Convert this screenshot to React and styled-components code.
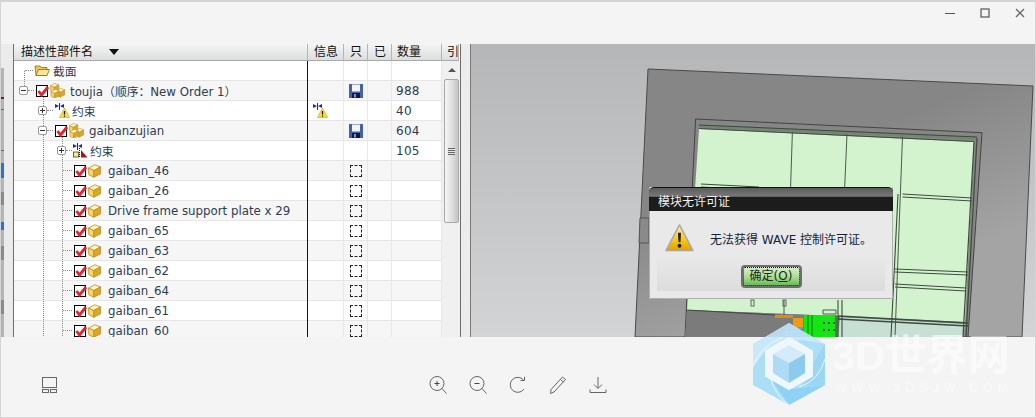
import styled, { createGlobalStyle } from "styled-components";

const Global = createGlobalStyle`
  html, body { margin: 0; padding: 0; background: #f4f4f4; }
  body { width: 1036px; height: 418px; overflow: hidden; font-family: "DejaVu Sans", "Noto Sans CJK SC", sans-serif; }
`;

const Shell = styled.div`
  position: relative;
  width: 1036px;
  height: 418px;
  display: flex;
  flex-direction: column;
  box-sizing: border-box;
  border: 1px solid #d4d4d4;
  border-top-width: 2px;
  background: #f4f4f4;
`;

const TitleBar = styled.div`
  height: 42px;
  display: flex;
  justify-content: flex-end;
  gap: 5px;
  padding-top: 4px;
  box-sizing: border-box;
`;

const WinBtn = styled.div`
  width: 30px;
  height: 14px;
  display: flex;
  align-items: center;
  justify-content: center;
`;

const Body = styled.div`
  height: 293px;
  display: flex;
`;

const SideStrip = styled.div`
  width: 13px;
  background: #ebebeb;
  border-right: 1px solid #6e6e6e;
  padding-top: 24px;
  box-sizing: border-box;
  overflow: hidden;
`;

const Segment = styled.div`
  width: 3px;
  height: ${(p) => p.$h}px;
  background: ${(p) => p.$c};
`;

const TreePanel = styled.div`
  width: 447px;
  box-sizing: border-box;
  display: flex;
  flex-direction: column;
  background: #fff;
  border-right: 1px solid #6e6e6e;
  overflow: hidden;
`;

const HeaderRow = styled.div`
  height: 17px;
  width: 445px;
  box-sizing: border-box;
  display: grid;
  grid-template-columns: 294px 36px 24px 24px 50px 17px;
  background: linear-gradient(#f4f5f5, #dcdede);
  border-bottom: 1px solid #a9a9a9;
`;

const HeaderCell = styled.div`
  font-size: 12px;
  line-height: 15px;
  color: #111;
  padding-left: ${(p) => p.$pad}px;
  box-shadow: inset -1px 0 0 #b5b5b5;
  white-space: nowrap;
  overflow: hidden;
  display: flex;
  align-items: center;
`;

const SortArrow = styled.span`
  width: 0;
  height: 0;
  margin-left: 16px;
  border-left: 5px solid transparent;
  border-right: 5px solid transparent;
  border-top: 6px solid #111;
`;

const RowsWrap = styled.div`
  display: flex;
  flex: 1;
  min-height: 0;
`;

const Rows = styled.div`
  width: 428px;
  position: relative;
`;

const Row = styled.div`
  height: 20px;
  display: grid;
  grid-template-columns: 294px 36px 24px 24px 50px;
  background: linear-gradient(#e6e6e6, #e6e6e6) bottom / 100% 1px no-repeat, ${(p) => (p.$odd ? "#f6f6f6" : "#fff")};
`;

const Cell = styled.div`
  position: relative;
  display: flex;
  align-items: center;
  justify-content: ${(p) => (p.$center ? "center" : "flex-start")};
  box-sizing: border-box;
  padding-bottom: 1px;
  border-right: 1px solid #e8e8e8;
  font-size: 12px;
  color: #2f3b52;
`;

const NameCell = styled(Cell)`
  padding-left: ${(p) => p.$indent}px;
  border-right: 1px solid #111;
  white-space: nowrap;
  font-size: 11.8px;
`;

const InfoCell = styled(Cell)`
  padding-left: 5px;
`;

const CountCell = styled(Cell)`
  padding-left: 4px;
  letter-spacing: 0.3px;
`;

const Expander = styled.span`
  width: 9px;
  height: 9px;
  box-sizing: border-box;
  border: 1px solid #9a9a9a;
  border-radius: 2px;
  background: #fff;
  position: relative;
  flex: none;
  &::before {
    content: "";
    position: absolute;
    left: 1px;
    right: 1px;
    top: 3px;
    height: 1px;
    background: #333;
  }
  &::after {
    content: "";
    display: ${(p) => (p.$open ? "none" : "block")};
    position: absolute;
    top: 1px;
    bottom: 1px;
    left: 3px;
    width: 1px;
    background: #333;
  }
`;

const Dots = styled.span`
  width: ${(p) => p.$w}px;
  margin-right: ${(p) => p.$gap}px;
  border-top: 1px dotted #8a8a8a;
  flex: none;
`;

const CheckBox = styled.span`
  width: 12px;
  height: 12px;
  box-sizing: border-box;
  border: 1px solid #000;
  background: #fff;
  flex: none;
  position: relative;
  margin-right: 2px;
  svg {
    position: absolute;
    left: -1px;
    top: -2px;
  }
`;

const IconSlot = styled.span`
  display: flex;
  flex: none;
  margin-right: ${(p) => p.$gap}px;
`;

const DashBox = styled.span`
  width: 12px;
  height: 12px;
  box-sizing: border-box;
  border: 1px dashed #222;
`;

const Guide = styled.span`
  position: absolute;
  top: ${(p) => p.$top}px;
  left: ${(p) => p.$left}px;
  height: ${(p) => p.$h}px;
  border-left: 1px dotted #8a8a8a;
`;

const ScrollTrack = styled.div`
  width: 18px;
  box-sizing: border-box;
  padding-left: 1px;
  background: #f0f0f0;
  display: flex;
  flex-direction: column;
  align-items: center;
`;

const ScrollUp = styled.span`
  width: 0;
  height: 0;
  margin: 7px 0 7px;
  border-left: 4px solid transparent;
  border-right: 4px solid transparent;
  border-bottom: 4px solid #555;
`;

const ScrollThumb = styled.div`
  width: 15px;
  height: 144px;
  box-sizing: border-box;
  border: 1px solid #a8a8a8;
  border-radius: 2px;
  background: linear-gradient(90deg, #f6f6f6, #dedede 55%, #c4c4c4);
  display: flex;
  align-items: center;
  justify-content: center;
`;

const Grip = styled.span`
  width: 7px;
  height: 7px;
  background: repeating-linear-gradient(#666 0 1px, #e4e4e4 1px 2px);
`;

const Divider = styled.div`
  width: 9px;
  background: #ececec;
`;

const Viewport = styled.div`
  flex: 1;
  position: relative;
  border-left: 1px solid #7a7a7a;
  overflow: hidden;
  background: linear-gradient(#b5b6b8, #d3d4d6);
  svg {
    display: block;
  }
`;

const Dialog = styled.div`
  position: absolute;
  left: 178px;
  top: 143px;
  width: 244px;
  height: 112px;
  background: #e9e9e9;
  border: 1px solid #b0b0b0;
  border-top: none;
  box-sizing: border-box;
  display: flex;
  flex-direction: column;
`;

const DialogTitle = styled.div`
  height: 24px;
  margin: 0 -1px;
  border-radius: 5px 5px 0 0;
  background: linear-gradient(#5c5c5c, #787878 36%, #1c1c1c 40%, #1c1c1c);
  border-top: 1px solid #111;
  box-sizing: border-box;
  color: #f0f0f0;
  font-size: 12px;
  padding: 7px 0 0 9px;
  line-height: 15px;
`;

const DialogBody = styled.div`
  flex: 1;
  margin: 0 7px 7px;
  display: flex;
  flex-direction: column;
  background: linear-gradient(#e9e9e9 55%, #dcdcdc);
`;

const Message = styled.div`
  display: flex;
  align-items: center;
  height: 54px;
  padding-left: 8px;
  gap: 16px;
  font-size: 12px;
  color: #14233c;
  white-space: nowrap;
`;

const OkButton = styled.div`
  align-self: center;
  width: 61px;
  height: 23px;
  box-sizing: border-box;
  border: 2px solid #6e6e6e;
  border-radius: 4px;
  background: linear-gradient(#d4efca, #b0e09c 48%, #62b84d);
  outline: 1px dotted #111;
  outline-offset: -3px;
  font-size: 12px;
  line-height: 19px;
  text-align: center;
  color: #1b2a12;
  u {
    text-decoration: underline;
  }
`;

const BottomBar = styled.div`
  flex: 1;
  display: grid;
  grid-template-columns: 1fr auto 1fr;
  align-items: center;
  padding-top: 16px;
`;

const ToolGroup = styled.div`
  display: flex;
  gap: 22px;
  align-items: center;
`;

const LayoutIconWrap = styled.div`
  padding-left: 41px;
  display: flex;
`;

const WmLogo = styled.svg`
  position: absolute;
  left: 752px;
  top: 321px;
  opacity: 0.88;
  pointer-events: none;
`;

const WmTitle = styled.div`
  position: absolute;
  left: 831px;
  top: 334px;
  font: bold 41.5px/40px "Liberation Sans", "Noto Sans CJK SC", sans-serif;
  color: rgba(255, 255, 255, 0.6);
  white-space: nowrap;
`;

const WmUrl = styled.div`
  position: absolute;
  left: 834px;
  top: 380px;
  font: 12px/12px "Liberation Sans", sans-serif;
  letter-spacing: 5.4px;
  color: rgba(255, 255, 255, 0.6);
  white-space: nowrap;
`;

function RedCheck() {
  return (
    <svg width="14" height="13" viewBox="0 0 14 13">
      <path d="M2.5 7 L5.5 11 L12 3" fill="none" stroke="#e8202a" strokeWidth="2.8" />
    </svg>
  );
}

function Cube({ x = 0, y = 0, s = 1 }) {
  return (
    <g transform={`translate(${x} ${y}) scale(${s})`}>
      <path d="M0.5 4 L7 0.5 L13 2.8 L6 6.5 Z" fill="#fff4bd" stroke="#b38d2a" strokeWidth=".8" />
      <path d="M0.5 4 L6 6.5 V13.5 L0.8 10.8 Z" fill="#f8d764" stroke="#b38d2a" strokeWidth=".8" />
      <path d="M6 6.5 L13 2.8 V10 L6 13.5 Z" fill="#dda726" stroke="#b38d2a" strokeWidth=".8" />
    </g>
  );
}

function Part() {
  return (
    <svg width="13" height="14" viewBox="0 0 13.5 14">
      <Cube />
    </svg>
  );
}

function Assembly() {
  return (
    <svg width="15" height="15" viewBox="0 0 15 15">
      <Cube x={0} y={0} s={0.68} />
      <Cube x={6} y={5} s={0.68} />
      <Cube x={0.5} y={6} s={0.68} />
    </svg>
  );
}

function Constraint({ warn }) {
  return (
    <svg width="15" height="15" viewBox="0 0 15 15">
      <path d="M0 1 L4 3 L0 5 Z M9 1 L5 3 L9 5 Z" fill="#1a2bb0" />
      <path d="M4.5 0 V7" stroke="#1a2bb0" strokeWidth="1" />
      {warn ? (
        <g>
          <path d="M9.5 5 L14.6 14.5 H4.4 Z" fill="#ffdc30" stroke="#c4a52a" strokeWidth=".6" />
          <path d="M9.5 8 V11.5 M9.5 12.5 V13.8" stroke="#111" strokeWidth="1.2" />
        </g>
      ) : (
        <g>
          <rect x="0.5" y="9" width="5" height="5" fill="#ffe880" stroke="#444" strokeWidth=".8" />
          <path d="M8 7 L14.5 14.5 H8 Z" fill="#a81020" />
          <path d="M6.5 5 V14" stroke="#111" strokeDasharray="1 1" />
        </g>
      )}
    </svg>
  );
}

function Floppy() {
  return (
    <svg width="14" height="14" viewBox="0 0 14 14">
      <rect width="14" height="14" fill="#4562a8" />
      <rect x="3" y="0.5" width="8" height="7" fill="#f4f4f4" />
      <rect x="3" y="9" width="8" height="5" fill="#101a40" />
      <rect x="5" y="10" width="2" height="3.5" fill="#7f95cc" />
    </svg>
  );
}

function Folder() {
  return (
    <svg width="16" height="13" viewBox="0 0 16 13">
      <path d="M1 2 H6 L7.5 3.5 H13 V11.5 H2 Z" fill="#f0c55a" stroke="#8a6a18" strokeWidth=".8" />
      <path d="M2 11.5 L4.5 5.5 H15.5 L13 11.5 Z" fill="#ffe69a" stroke="#8a6a18" strokeWidth=".8" />
    </svg>
  );
}

function Warning() {
  return (
    <svg width="29" height="28" viewBox="0 0 30 29">
      <defs>
        <linearGradient id="wg" x1="0" x2="0" y1="0" y2="1">
          <stop offset="0" stopColor="#fff2a0" />
          <stop offset="0.6" stopColor="#fcc612" />
          <stop offset="1" stopColor="#e69c00" />
        </linearGradient>
      </defs>
      <path d="M15 1 L29 27.5 H1 Z" fill="url(#wg)" stroke="#a9a9a9" strokeWidth="1.6" strokeLinejoin="round" />
      <path d="M13.4 9 H16.6 L16 19 H14 Z" fill="#222" />
      <circle cx="15" cy="22.5" r="2" fill="#222" />
    </svg>
  );
}

const strip = [
  [29, "#b4b4b4"], [2, "#7a1a1a"], [10, "#b4b4b4"], [1, "#666"], [40, "#b4b4b4"], [1, "#666"], [12, "#b4b4b4"],
  [15, "#2f6fd8"], [14, "#b4b4b4"], [13, "#8a8a8a"], [17, "#b4b4b4"], [8, "#2f6fd8"], [16, "#b4b4b4"], [14, "#8a8a8a"],
  [40, "#b4b4b4"], [14, "#8a8a8a"], [23, "#b4b4b4"],
];

const tree = [
  { name: "截面", indent: 11, kind: "folder" },
  { name: "toujia（顺序：New Order 1）", indent: 5, kind: "assembly", open: true, save: true, count: "988" },
  { name: "约束", indent: 24, kind: "warn", closed: true, info: true, count: "40" },
  { name: "gaibanzujian", indent: 24, kind: "assembly", open: true, save: true, count: "604" },
  { name: "约束", indent: 43, kind: "limit", closed: true, count: "105" },
  ...["gaiban_46", "gaiban_26", "Drive frame support plate x 29", "gaiban_65", "gaiban_63", "gaiban_62", "gaiban_64", "gaiban_61", "gaiban_60"].map(
    (name) => ({ name, indent: 49, kind: "part", dash: true })
  ),
];

function RowIcon({ row }) {
  if (row.kind === "folder") {
    return (
      <IconSlot $gap={3}>
        <Folder />
      </IconSlot>
    );
  }
  if (row.kind === "warn" || row.kind === "limit") {
    return (
      <IconSlot $gap={2}>
        <Constraint warn={row.kind === "warn"} />
      </IconSlot>
    );
  }
  return (
    <>
      <CheckBox>
        <RedCheck />
      </CheckBox>
      <IconSlot $gap={row.kind === "part" ? 7 : 5}>{row.kind === "assembly" ? <Assembly /> : <Part />}</IconSlot>
    </>
  );
}

function TreeRow({ row, odd }) {
  const hasBox = row.open || row.closed;
  return (
    <Row $odd={odd}>
      <NameCell $indent={row.indent}>
        {hasBox ? <Expander $open={row.open} /> : null}
        {row.kind === "folder" ? <Dots $w={8} $gap={1} /> : null}
        {row.kind === "part" ? <Dots $w={9} $gap={2} /> : null}
        {hasBox ? <Dots $w={6} $gap={row.kind === "limit" ? 1 : 2} /> : null}
        <RowIcon row={row} />
        <span>{row.name}</span>
      </NameCell>
      <InfoCell>{row.info ? <Constraint warn /> : null}</InfoCell>
      <Cell $center>
        {row.save ? <Floppy /> : null}
        {row.dash ? <DashBox /> : null}
      </Cell>
      <Cell />
      <CountCell>{row.count}</CountCell>
    </Row>
  );
}

function CadView() {
  const wire = "#3d4a3d";
  return (
    <svg width="564" height="293" viewBox="0 0 564 293">
      <defs>
        <linearGradient id="plate" x1="0" x2="0.25" y1="0.55" y2="1">
          <stop offset="0" stopColor="#868686" />
          <stop offset="1" stopColor="#a4a4a4" />
        </linearGradient>
      </defs>
      <path d="M177 25 L562 42 L551 293 L164 293 Z" fill="url(#plate)" stroke="#4a4a4a" />
      <path d="M169 174 H178 V199 H168 Z" fill="#8a8a8a" stroke="#555" />
      <path d="M224.6 75 L511 88.7 L497 293 L214 293 Z" fill="#868686" stroke="#444" />
      <path d="M228 85 L503 98 L494 278 L367 272 L216 266 Z" fill="#d2f3ce" />
      <path d="M216 266 L367 272 L366 293 L214 293 Z" fill="#7b7b7b" />
      <path d="M369 273 L494 280 L492 293 L367 293 Z" fill="#c6e0d4" />
      <path d="M228 82 L506 94.3" stroke="#71876f" strokeWidth="3" fill="none" />
      <path d="M228 81 L506 93 M228 84.5 L503 97.5" stroke={wire} fill="none" />
      <path d="M506 94 L495 293 M503 98 L492 293" stroke={wire} strokeWidth="1.2" fill="none" />
      <path d="M321.4 87.7 L319.6 143 M376 90 L373.7 143 M431.5 92.7 L424 293" stroke="#4c5a4c" fill="none" />
      <path d="M230 140 L288 143 M230 143 L288 146" stroke={wire} fill="none" />
      <path d="M431.5 150 L501 154 M431.5 153 L501 157" stroke={wire} fill="none" />
      <path d="M424 225 L497 228 M424 228 L497 231 M424 240 L495 244 M424 243 L495 247" stroke={wire} fill="none" />
      <path d="M367 272 L497 279 M367 275 L497 282" stroke={wire} strokeWidth="1.3" fill="none" />
      <path d="M367 256 V293 M371 256 V293 M427 150 L420 293" stroke={wire} strokeWidth="1.1" fill="none" />
      <path d="M216 266 L304 271" stroke="#444" fill="none" />
      <rect x="280" y="256" width="3" height="6" fill="none" stroke="#666" />
      <rect x="312" y="256" width="3" height="6" fill="none" stroke="#666" />
      <path d="M313 256 V272 M352 266 H365 V270 H352 Z" stroke="#555" fill="none" />
      <rect x="333" y="271" width="32" height="22" fill="#14e614" />
      <path d="M337 271 V293 M341 271 V293 M365 271 V293" stroke="#0a7a0a" />
      <rect x="322" y="274" width="10" height="9" fill="#f09a14" />
      <path d="M304 272.5 H322" stroke="#e08a10" strokeWidth="3" />
      <path d="M352 279 h2 M357 279 h2 M362 279 h2 M352 286 h2 M357 286 h2 M362 286 h2" stroke="#0a4a0a" strokeWidth="2" />
      <path d="M314 284 H332 M314 288 H332 M314 291 H332" stroke="#5aa4d8" strokeWidth="2" />
    </svg>
  );
}

function WatermarkLogo() {
  return (
    <WmLogo width="72" height="82" viewBox="0 0 72 82">
      <path d="M36 0 L72 21 V62 L36 82 L0 62 V21 Z" fill="#a4dcf8" />
      <path d="M36 0 L72 21 L48 17 L14 26 L0 44 V21 Z" fill="#c4e8fb" />
      <path d="M72 21 V62 L48 64 L60 40 Z" fill="#8fd3f6" />
      <path d="M72 62 L36 82 L18 56 L40 66 Z" fill="#80cef6" />
      <path d="M36 15 L59 28 V53 L36 66 L13 53 V28 Z" fill="#f0f8fd" stroke="#eef8fd" strokeWidth="2" />
      <path d="M36 22 L52 31 L36 40 L20 31 Z" fill="#cfeafb" />
      <path d="M20 31 L36 40 V60 L20 50 Z" fill="#a5d8f5" />
      <path d="M52 31 L36 40 V60 L52 50 Z" fill="#7fc6ee" />
      <path d="M0 44 Q6 24 30 14 M72 36 Q66 58 46 64 M18 56 Q22 72 36 82" stroke="#f0f8fd" fill="none" />
    </WmLogo>
  );
}

export default function App() {
  return (
    <Shell>
      <Global />
      <TitleBar>
        <WinBtn>
          <svg width="12" height="12" viewBox="0 0 12 12">
            <path d="M1 6.5 H11" stroke="#555" />
          </svg>
        </WinBtn>
        <WinBtn>
          <svg width="10" height="10" viewBox="0 0 10 10">
            <rect x="1" y="1" width="8" height="8" fill="none" stroke="#555" strokeWidth="1.2" />
          </svg>
        </WinBtn>
        <WinBtn>
          <svg width="10" height="10" viewBox="0 0 10 10">
            <path d="M1 1 L9 9 M9 1 L1 9" stroke="#666" strokeWidth="1.3" />
          </svg>
        </WinBtn>
      </TitleBar>
      <Body>
        <SideStrip>
          {strip.map(([h, c], i) => (
            <Segment key={i} $h={h} $c={c} />
          ))}
        </SideStrip>
        <TreePanel>
          <HeaderRow>
            <HeaderCell $pad={7}>
              描述性部件名
              <SortArrow />
            </HeaderCell>
            <HeaderCell $pad={6}>信息</HeaderCell>
            <HeaderCell $pad={6}>只</HeaderCell>
            <HeaderCell $pad={6}>已</HeaderCell>
            <HeaderCell $pad={5}>数量</HeaderCell>
            <HeaderCell $pad={5}>引</HeaderCell>
          </HeaderRow>
          <RowsWrap>
            <Rows>
              <Guide $left={10} $top={10} $h={15} />
              <Guide $left={29} $top={35} $h={240} />
              <Guide $left={48} $top={75} $h={200} />
              {tree.map((row, i) => (
                <TreeRow key={i} row={row} odd={i % 2 === 1} />
              ))}
            </Rows>
            <ScrollTrack>
              <ScrollUp />
              <ScrollThumb>
                <Grip />
              </ScrollThumb>
            </ScrollTrack>
          </RowsWrap>
        </TreePanel>
        <Divider />
        <Viewport>
          <CadView />
          <Dialog>
            <DialogTitle>模块无许可证</DialogTitle>
            <DialogBody>
              <Message>
                <Warning />
                无法获得 WAVE 控制许可证。
              </Message>
              <OkButton>
                确定(<u>O</u>)
              </OkButton>
            </DialogBody>
          </Dialog>
        </Viewport>
      </Body>
      <BottomBar>
        <LayoutIconWrap>
          <svg width="16" height="16" viewBox="0 0 16 16" fill="none" stroke="#666">
            <rect x="0.5" y="0.5" width="14" height="10" />
            <rect x="0.5" y="12.5" width="6" height="3" />
            <rect x="8.5" y="12.5" width="6" height="3" />
          </svg>
        </LayoutIconWrap>
        <ToolGroup>
          <svg width="18" height="18" viewBox="0 0 18 18" fill="none" stroke="#666">
            <circle cx="8" cy="7.5" r="7" />
            <path d="M13 12.5 L17.5 17.5" />
            <path d="M5.5 7.5 H10.5 M8 5 V10" stroke="#444" />
          </svg>
          <svg width="18" height="18" viewBox="0 0 18 18" fill="none" stroke="#666">
            <circle cx="8" cy="7.5" r="7" />
            <path d="M13 12.5 L17.5 17.5" />
            <path d="M5.5 7.5 H10.5" stroke="#444" />
          </svg>
          <svg width="18" height="18" viewBox="0 0 18 18" fill="none" stroke="#666">
            <path d="M14.5 4 A7.5 7.5 0 1 0 15 13" />
            <path d="M15.5 1 V4.5 H11.5" />
          </svg>
          <svg width="18" height="18" viewBox="0 0 18 18" fill="none" stroke="#666">
            <path d="M13.5 1 L16.5 3.5 L5 16 L1.5 17.5 L2 13.5 Z M11.5 3.5 L14.5 6" />
          </svg>
          <svg width="18" height="18" viewBox="0 0 18 18" fill="none" stroke="#666">
            <path d="M9 1 V12 M5 8.5 L9 12.5 L13 8.5 M1 13.5 V16.5 H17 V13.5" />
          </svg>
        </ToolGroup>
        <div />
      </BottomBar>
      <WatermarkLogo />
      <WmTitle>3D世界网</WmTitle>
      <WmUrl>WWW.3DSJW.COM</WmUrl>
    </Shell>
  );
}
